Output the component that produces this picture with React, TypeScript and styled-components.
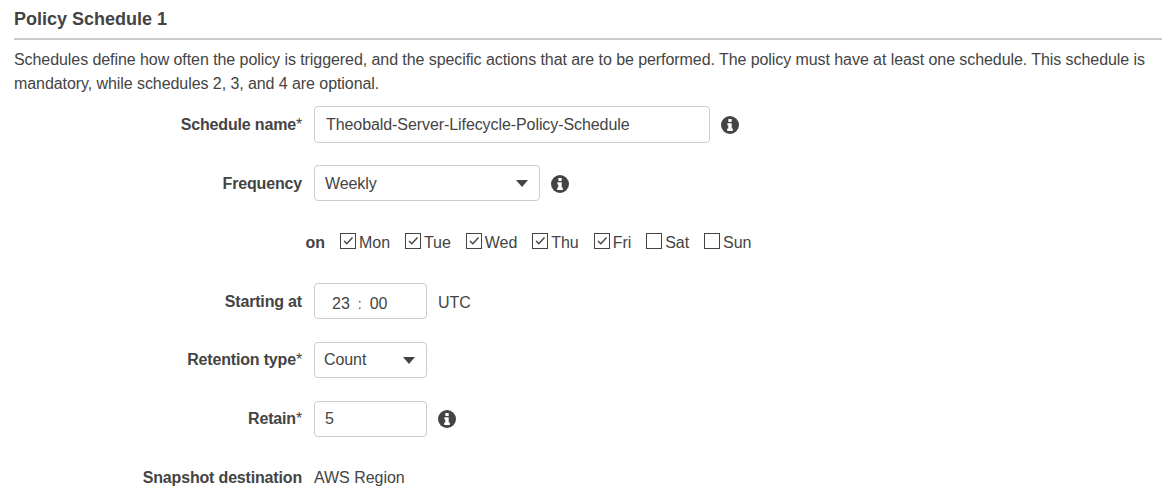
import React from "react";
import styled, { createGlobalStyle } from "styled-components";

const days = [
  { name: "Mon", checked: true },
  { name: "Tue", checked: true },
  { name: "Wed", checked: true },
  { name: "Thu", checked: true },
  { name: "Fri", checked: true },
  { name: "Sat", checked: false },
  { name: "Sun", checked: false },
];

const InfoIcon = ({ top = 10 }: { top?: number }) => (
  <InfoSvg viewBox="0 0 18 18" $top={top}>
    <circle cx="9" cy="9" r="9" fill="#444" />
    <rect x="7.3" y="3" width="3.4" height="3" rx="0.4" fill="#fff" />
    <path d="M6.4 7.3 H10.7 V12.6 H11.8 V14.9 H6.2 V12.6 H7.3 V9.5 H6.4 Z" fill="#fff" />
  </InfoSvg>
);

const App = () => {
  return (
    <>
      <GlobalStyle />
      <Page>
        <Title>Policy Schedule 1</Title>
        <Description>
          Schedules define how often the policy is triggered, and the specific actions that are to be performed. The
          policy must have at least one schedule. This schedule is mandatory, while schedules 2, 3, and 4 are optional.
        </Description>
        <Form>
          <Row>
            <Label $top={7}>
              Schedule name<Required>*</Required>
            </Label>
            <Field $width={396} $height={37}>
              <FieldText $indent={11}>Theobald-Server-Lifecycle-Policy-Schedule</FieldText>
            </Field>
            <InfoIcon />
          </Row>
          <Row>
            <Label $top={7}>Frequency</Label>
            <Field $width={226}>
              <FieldText $drop={1}>Weekly</FieldText>
              <Caret />
            </Field>
            <InfoIcon />
          </Row>
          <DaysRow>
            <DaysLabel>on</DaysLabel>
            {days.map((day) => (
              <Day key={day.name}>
                <CheckBox>
                  {day.checked && (
                    <svg width="14" height="14" viewBox="0 0 14 14">
                      <path d="M3 7 L5.8 9.8 L11.5 3.5" fill="none" stroke="#444" strokeWidth="1.4" />
                    </svg>
                  )}
                </CheckBox>
                {day.name}
              </Day>
            ))}
          </DaysRow>
          <Row>
            <Label $top={7}>Starting at</Label>
            <Field $width={113}>
              <TimeText>
                <span>23</span>
                <TimeColon>:</TimeColon>
                <span>00</span>
              </TimeText>
            </Field>
            <Unit>UTC</Unit>
          </Row>
          <Row>
            <Label>
              Retention type<Required>*</Required>
            </Label>
            <Field $width={113}>
              <FieldText $indent={9}>Count</FieldText>
              <Caret />
            </Field>
          </Row>
          <Row>
            <Label>
              Retain<Required>*</Required>
            </Label>
            <Field $width={113}>
              <FieldText $indent={10}>5</FieldText>
            </Field>
            <InfoIcon top={9} />
          </Row>
          <PlainRow>
            <Label $top={0}>Snapshot destination</Label>
            <PlainValue>AWS Region</PlainValue>
          </PlainRow>
        </Form>
      </Page>
    </>
  );
};

export default App;

const GlobalStyle = createGlobalStyle`
  html, body {
    margin: 0;
    padding: 0;
    background: #fff;
    overflow: hidden;
  }
  body {
    font-family: "Liberation Sans", Arial, sans-serif;
    font-size: 16px;
    color: #444;
  }
`;

const Page = styled.div`
  width: 1163px;
  height: 494px;
  box-sizing: border-box;
  padding: 9px 0 0 14px;
`;

const Title = styled.h3`
  margin: 0 1px 0 0;
  padding-top: 1px;
  padding-bottom: 9px;
  border-bottom: 2px solid #ccc;
  font-size: 18px;
  line-height: 19px;
  font-weight: 700;
  color: #444;
`;

const Description = styled.p`
  margin: 8px 0 0;
  width: 1140px;
  font-size: 16px;
  line-height: 24px;
  letter-spacing: -0.07px;
`;

const Form = styled.div`
  display: flex;
  flex-direction: column;
  margin-top: 10px;
`;

const Row = styled.div`
  display: flex;
  align-items: flex-start;
  height: 36px;
  margin-bottom: 23px;
`;

const DaysRow = styled.div`
  display: flex;
  align-items: center;
  height: 24px;
  margin-top: 7px;
  margin-bottom: 28px;
`;

const PlainRow = styled.div`
  display: flex;
  align-items: center;
  height: 24px;
  margin-top: 6px;
`;

const Label = styled.div<{ $top?: number }>`
  width: 288px;
  flex-shrink: 0;
  margin-right: 12px;
  padding-top: ${(p) => p.$top ?? 6}px;
  line-height: 24px;
  text-align: right;
  font-weight: 700;
  letter-spacing: -0.17px;
`;

const Required = styled.span`
  font-weight: 400;
`;

const DaysLabel = styled.div`
  width: 311px;
  flex-shrink: 0;
  margin-right: 15px;
  text-align: right;
  font-weight: 700;
`;

const Field = styled.div<{ $width: number; $height?: number }>`
  position: relative;
  display: flex;
  align-items: center;
  flex-shrink: 0;
  box-sizing: border-box;
  width: ${(p) => p.$width}px;
  height: ${(p) => p.$height ?? 36}px;
  border: 1px solid #ccc;
  border-radius: 4px;
  background: #fff;
`;

const FieldText = styled.span<{ $indent?: number; $drop?: number }>`
  padding-left: ${(p) => p.$indent ?? 10}px;
  padding-top: ${(p) => (p.$drop ?? 0) * 2}px;
  letter-spacing: -0.08px;
  color: #444;
`;

const Caret = styled.span`
  position: absolute;
  right: 11px;
  top: 14px;
  width: 0;
  height: 0;
  border-left: 6.5px solid transparent;
  border-right: 6.5px solid transparent;
  border-top: 7px solid #444;
`;

const TimeText = styled.span`
  display: flex;
  align-items: center;
  padding-left: 17px;
  padding-top: 5px;
`;

const TimeColon = styled.span`
  margin: 0 8px 0 8px;
  font-size: 14px;
`;

const InfoSvg = styled.svg<{ $top: number }>`
  flex-shrink: 0;
  width: 18px;
  height: 18px;
  margin-top: ${(p) => p.$top}px;
  margin-left: 11px;
`;

const Unit = styled.span`
  margin-left: 11px;
  padding-top: 8px;
  line-height: 24px;
`;

const Day = styled.label`
  display: flex;
  align-items: center;
  margin-right: 15px;
  letter-spacing: -0.05px;
  color: #444;
`;

const CheckBox = styled.span`
  display: block;
  box-sizing: border-box;
  width: 16px;
  height: 16px;
  margin-top: -4px;
  margin-right: 3px;
  border: 1px solid #444;
  background: #fff;

  svg {
    display: block;
  }
`;

const PlainValue = styled.span`
  letter-spacing: -0.03px;
  color: #444;
`;
